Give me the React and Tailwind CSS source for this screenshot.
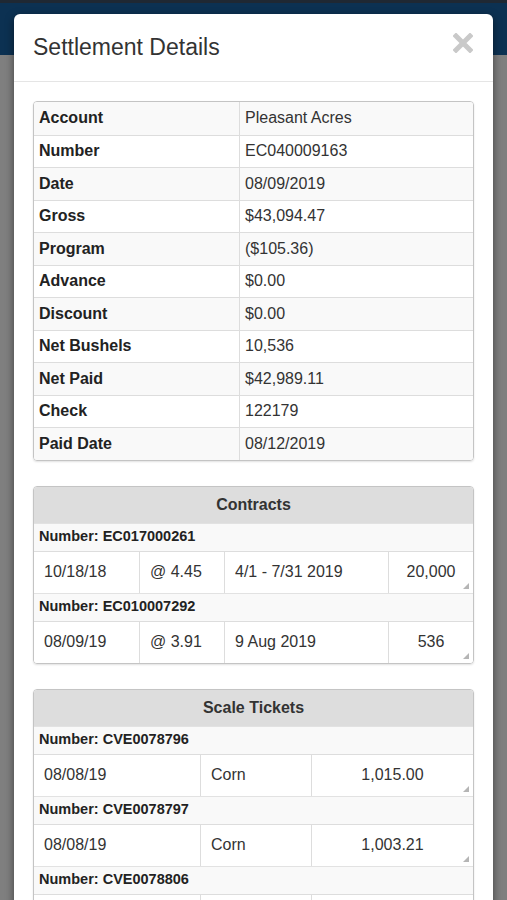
const summary = [
  ["Account", "Pleasant Acres"],
  ["Number", "EC040009163"],
  ["Date", "08/09/2019"],
  ["Gross", "$43,094.47"],
  ["Program", "($105.36)"],
  ["Advance", "$0.00"],
  ["Discount", "$0.00"],
  ["Net Bushels", "10,536"],
  ["Net Paid", "$42,989.11"],
  ["Check", "122179"],
  ["Paid Date", "08/12/2019"],
];

const contracts = [
  { number: "EC017000261", cells: ["10/18/18", "@ 4.45", "4/1 - 7/31 2019"], qty: "20,000" },
  { number: "EC010007292", cells: ["08/09/19", "@ 3.91", "9 Aug 2019"], qty: "536" },
];

const tickets = [
  { number: "CVE0078796", cells: ["08/08/19", "Corn"], qty: "1,015.00" },
  { number: "CVE0078797", cells: ["08/08/19", "Corn"], qty: "1,003.21" },
  { number: "CVE0078806", cells: ["08/08/19", "Corn"], qty: "998.40" },
];

function Grip() {
  return (
    <svg className="absolute bottom-[4px] right-[4px]" width="6" height="6" viewBox="0 0 6 6">
      <path d="M6 0 L6 6 L0 6 Z" fill="#b5b5b5" />
    </svg>
  );
}

function Panel({ title, rows, widths }) {
  return (
    <div className="overflow-hidden rounded-[4px] border border-[#c4c4c4] shadow-[0_1px_2px_rgba(0,0,0,0.12)]">
      <div className="flex h-[36px] items-center justify-center bg-[#dddddd] text-[16px] font-bold text-[#333]">
        {title}
      </div>
      {rows.map((r, i) => (
        <div key={i}>
          <div className="flex h-[28px] items-center border-t border-[#e2e2e2] bg-[#f9f9f9] px-[5px] text-[14.5px] font-bold text-[#222]">
            Number: {r.number}
          </div>
          <div className="flex h-[42px] border-t border-[#dddddd] bg-white text-[16px] text-[#333]">
            {r.cells.map((c, j) => (
              <div
                key={j}
                className={"flex items-center border-r border-[#dddddd] pl-[10px] " + widths[j]}
              >
                {c}
              </div>
            ))}
            <div className="relative flex flex-1 items-center justify-center">
              {r.qty}
              <Grip />
            </div>
          </div>
        </div>
      ))}
    </div>
  );
}

export default function App() {
  return (
    <div
      className="relative h-[900px] w-[507px] overflow-hidden bg-[#7f7f7f]"
      style={{ fontFamily: '"Liberation Sans", Arial, sans-serif' }}
    >
      {/* dimmed app header behind the backdrop */}
      <div className="h-[3px] bg-[#1f2833]" />
      <div className="h-[52px] bg-[#0c3152]" />

      {/* Modal */}
      <div className="absolute left-[14px] top-[14px] w-[479px] rounded-[6px] bg-white shadow-[0_3px_9px_rgba(0,0,0,0.5)]">
        <div className="flex h-[68px] items-center justify-between border-b border-[#e5e5e5] pl-[19px] pr-[20px]">
          <h4 className="text-[23px] text-[#333]">Settlement Details</h4>
          <svg width="20" height="20" viewBox="0 0 20 20" className="-mt-[9px]">
            <path d="M3 3 L17 17 M17 3 L3 17" stroke="#c9c9c9" strokeWidth="5" strokeLinecap="square" />
          </svg>
        </div>

        <div className="flex flex-col px-[19px] pt-[19px]">
          <div className="overflow-hidden rounded-[4px] border border-[#c4c4c4] shadow-[0_1px_2px_rgba(0,0,0,0.12)]">
            {summary.map(([k, v], i) => (
              <div
                key={k}
                className={
                  "flex h-[32.5px] text-[16px] text-[#333] " +
                  (i > 0 ? "border-t border-[#dddddd] " : "") +
                  (i % 2 === 0 ? "bg-[#f9f9f9]" : "bg-white")
                }
              >
                <div className="flex w-[206px] items-center border-r border-[#dddddd] pl-[5px] font-bold text-[#222]">
                  {k}
                </div>
                <div className="flex flex-1 items-center pl-[5px]">{v}</div>
              </div>
            ))}
          </div>

          <div className="mt-[25px]">
            <Panel title="Contracts" rows={contracts} widths={["w-[106px]", "w-[85px]", "w-[164px]"]} />
          </div>

          <div className="mt-[25px]">
            <Panel title="Scale Tickets" rows={tickets} widths={["w-[167px]", "w-[111px]"]} />
          </div>
        </div>
      </div>
    </div>
  );
}
